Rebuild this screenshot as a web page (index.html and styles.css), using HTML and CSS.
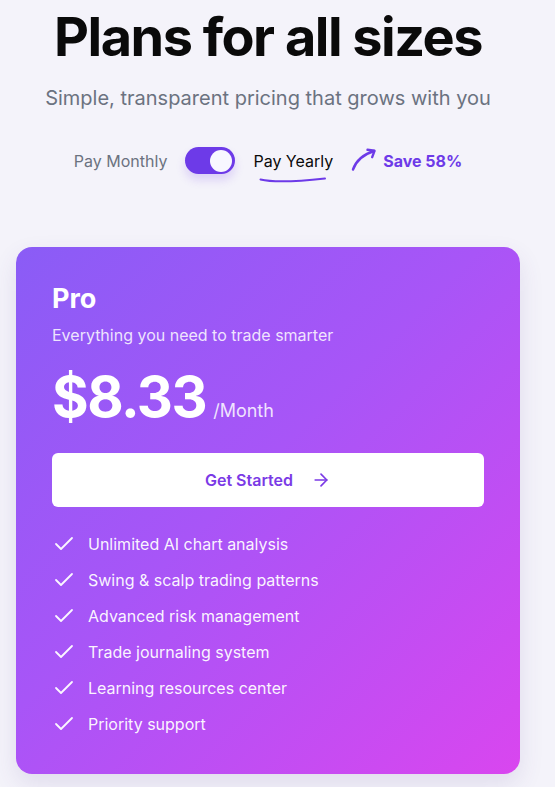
FILE: index.html
```html
<!DOCTYPE html>
<html lang="en">
<head>
<meta charset="utf-8">
<title>Pricing</title>
<link rel="stylesheet" href="styles.css">
</head>
<body>
<main class="page">
  <header class="intro">
    <h1 class="title">Plans for all sizes</h1>
    <p class="subtitle">Simple, transparent pricing that grows with you</p>
    <div class="billing">
      <span class="billing-option">Pay Monthly</span>
      <span class="switch"><span class="knob"></span></span>
      <span class="billing-option active">Pay Yearly
        <svg class="scribble" width="68" height="8" viewBox="0 0 68 8" fill="none"><path d="M1.5 4.5 C 14 7.5, 34 7, 66 3.5" stroke="#6d3ae8" stroke-width="2" stroke-linecap="round"/></svg>
      </span>
      <span class="save">
        <svg class="save-arrow" width="26" height="24" viewBox="0 0 26 24" fill="none"><path d="M2 21.5 C 5 13, 12 6.5, 23 3" stroke="#6d3ae8" stroke-width="2.4" stroke-linecap="round"/><path d="M16.5 1.8 L23.5 2.8 L21.2 9.2" stroke="#6d3ae8" stroke-width="2.4" stroke-linecap="round" stroke-linejoin="round"/></svg>
        Save 58%
      </span>
    </div>
  </header>

  <section class="card">
    <h2 class="plan">Pro</h2>
    <p class="plan-desc">Everything you need to trade smarter</p>
    <div class="price"><span class="amount">$8.33</span><span class="period">/Month</span></div>
    <button class="cta">Get Started
      <svg width="20" height="20" viewBox="0 0 24 24" fill="none" stroke="currentColor" stroke-width="2" stroke-linecap="round" stroke-linejoin="round"><path d="M5 12h14"/><path d="m12 5 7 7-7 7"/></svg>
    </button>
    <ul class="features">
      <li><svg width="24" height="24" viewBox="0 0 24 24" fill="none" stroke="currentColor" stroke-width="1.8" stroke-linecap="round" stroke-linejoin="round"><path d="M20 6 9 17l-5-5"/></svg>Unlimited AI chart analysis</li>
      <li><svg width="24" height="24" viewBox="0 0 24 24" fill="none" stroke="currentColor" stroke-width="1.8" stroke-linecap="round" stroke-linejoin="round"><path d="M20 6 9 17l-5-5"/></svg>Swing &amp; scalp trading patterns</li>
      <li><svg width="24" height="24" viewBox="0 0 24 24" fill="none" stroke="currentColor" stroke-width="1.8" stroke-linecap="round" stroke-linejoin="round"><path d="M20 6 9 17l-5-5"/></svg>Advanced risk management</li>
      <li><svg width="24" height="24" viewBox="0 0 24 24" fill="none" stroke="currentColor" stroke-width="1.8" stroke-linecap="round" stroke-linejoin="round"><path d="M20 6 9 17l-5-5"/></svg>Trade journaling system</li>
      <li><svg width="24" height="24" viewBox="0 0 24 24" fill="none" stroke="currentColor" stroke-width="1.8" stroke-linecap="round" stroke-linejoin="round"><path d="M20 6 9 17l-5-5"/></svg>Learning resources center</li>
      <li><svg width="24" height="24" viewBox="0 0 24 24" fill="none" stroke="currentColor" stroke-width="1.8" stroke-linecap="round" stroke-linejoin="round"><path d="M20 6 9 17l-5-5"/></svg>Priority support</li>
    </ul>
  </section>
</main>
</body>
</html>
```
FILE: styles.css
```css
* { box-sizing: border-box; }
html, body { margin: 0; padding: 0; }
body {
  background: #f4f3fa;
  font-family: Inter, "Noto Sans", sans-serif;
  color: #0a0a0a;
  width: 555px;
  height: 787px;
  overflow: hidden;
}
.page {
  width: 504px;
  margin-left: 16px;
  padding-top: 10px;
}
.intro {
  display: flex;
  flex-direction: column;
  align-items: center;
}
.title {
  margin: 0;
  font-size: 54px;
  line-height: 1;
  font-weight: 700;
  letter-spacing: -1.5px;
  color: #0a0a0a;
  white-space: nowrap;
}
.subtitle {
  margin: 20px 0 0;
  font-size: 20px;
  line-height: 28px;
  color: #6b7280;
  white-space: nowrap;
}
.billing {
  margin-top: 35px;
  display: flex;
  align-items: center;
  font-size: 16px;
  line-height: 24px;
}
.billing-option { color: #6b7280; }
.billing-option.active {
  color: #0a0a0a;
  margin-left: 18px;
  position: relative;
}
.scribble {
  position: absolute;
  left: 6px;
  top: 26px;
}
.switch {
  margin-left: 18px;
  width: 50px;
  height: 27px;
  border-radius: 14px;
  background: #6d3ae8;
  display: flex;
  align-items: center;
  justify-content: flex-end;
  padding-right: 3px;
  box-shadow: 0 6px 10px rgba(109, 58, 232, 0.18);
}
.knob {
  width: 22px;
  height: 22px;
  border-radius: 50%;
  background: #f8f7ff;
}
.save {
  margin-left: 18px;
  display: flex;
  align-items: center;
  gap: 6px;
  color: #6d3ae8;
  font-weight: 700;
}
.save-arrow { margin-top: -2px; }
.card {
  margin-top: 73px;
  width: 504px;
  border-radius: 16px;
  padding: 34px 36px 38px;
  color: #fff;
  background: linear-gradient(135deg, #8a5cf6 0%, #a855f7 45%, #d946ef 100%);
  box-shadow: 0 10px 24px rgba(80, 60, 140, 0.12);
}
.plan {
  margin: 0;
  font-size: 27px;
  line-height: 36px;
  font-weight: 700;
}
.plan-desc {
  margin: 6px 0 0;
  font-size: 16px;
  line-height: 24px;
  color: rgba(255, 255, 255, 0.85);
}
.price {
  margin-top: 18px;
  display: flex;
  align-items: baseline;
  gap: 7px;
}
.amount {
  font-size: 56px;
  line-height: 64px;
  font-weight: 700;
  letter-spacing: -1.5px;
}
.period {
  font-size: 18px;
  color: rgba(255, 255, 255, 0.85);
}
.cta {
  margin-top: 24px;
  width: 100%;
  height: 54px;
  border: 0;
  border-radius: 6px;
  background: #fff;
  color: #7b3ae6;
  font-family: inherit;
  font-size: 16px;
  font-weight: 600;
  display: flex;
  align-items: center;
  justify-content: center;
  gap: 18px;
  padding: 0;
}
.features {
  list-style: none;
  margin: 25px 0 0;
  padding: 0;
  display: flex;
  flex-direction: column;
  gap: 12px;
}
.features li {
  display: flex;
  align-items: center;
  gap: 12px;
  font-size: 16px;
  line-height: 24px;
  color: rgba(255, 255, 255, 0.95);
}
```
